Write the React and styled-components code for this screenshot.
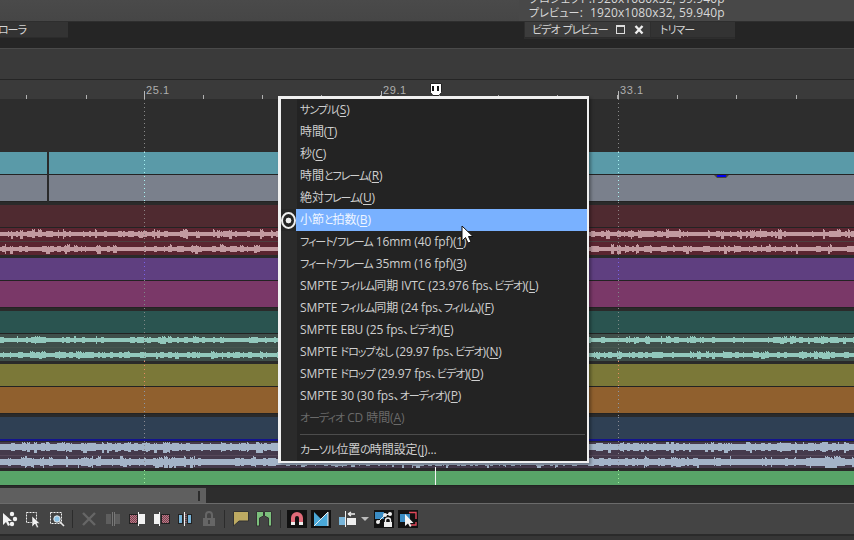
import React from 'react';
import styled, { createGlobalStyle } from 'styled-components';

const GlobalStyle = createGlobalStyle`
	html, body {
		margin: 0;
		padding: 0;
		background: #2d2d2d;
		overflow: hidden;
	}
	* {
		box-sizing: border-box;
	}
`;

const uiFont = `"Open Sans", "Noto Sans CJK JP", sans-serif`;

const Page = styled.div`
	position: relative;
	width: 854px;
	height: 540px;
	overflow: hidden;
	display: flex;
	flex-direction: column;
	font-family: ${uiFont};
	font-feature-settings: "palt";
`;

// the original UI font has condensed kana
const KanaRun = styled.span`
	font-size: 11px;
	letter-spacing: -1px;
`;

const InfoBar = styled.div`
	height: 22px;
	flex: none;
	display: flex;
	justify-content: flex-end;
	background: linear-gradient(#4a4a4a, #464646);
	border-bottom: 1px solid #2e2e2e;
`;

const InfoPanel = styled.div`
	width: 335px;
	height: 29px;
	flex: none;
	margin-top: -8px;
	padding-left: 10px;
	background: #484848;
	color: #d8d8d8;
	font-size: 12px;
	line-height: 14px;
`;

const InfoRow = styled.div`
	display: flex;
	white-space: nowrap;
	span:first-child {
		flex: none;
		width: 61px;
	}
	span:last-child {
		letter-spacing: 0.12px;
	}
`;

const TabStrip = styled.div`
	height: 26px;
	flex: none;
	display: flex;
	justify-content: space-between;
	background: #252525;
	padding-right: 119px;
`;

const Tab = styled.div`
	height: 16px;
	flex: none;
	display: flex;
	align-items: center;
	background: ${({ active }) => (active ? '#3c3c3c' : '#333')};
	border-bottom: 1px solid #2c2c2c;
	color: #d4d4d4;
	font-size: 12px;
	white-space: pre;
	width: ${({ width }) => width}px;
	padding-left: ${({ inset }) => inset}px;
`;

const TabTitle = styled.span`
	width: 83px;
	flex: none;
`;

const TabGlyph = styled.svg`
	display: block;
	flex: none;
	margin-right: 8px;
`;

const TabGroup = styled.div`
	display: flex;
	background: #2e2e2e;
	height: 17px;
	padding-left: 1px;
	gap: 1px;
`;

const LeftTab = styled(Tab)`
	justify-content: flex-end;
	padding-right: 42px;
	overflow: hidden;
`;

const ToolStrip = styled.div`
	height: 32px;
	flex: none;
	background: #3a3a3a;
	border-top: 1px solid #4a4a4a;
	border-bottom: 1px solid #252525;
`;

const Ruler = styled.div`
	position: relative;
	height: 19px;
	flex: none;
	background: #3a3a3a;
`;

const RulerDrawing = styled.svg`
	display: block;
`;

const RulerLabel = styled.span`
	position: absolute;
	top: 3px;
	left: ${({ x }) => x}px;
	color: #aeaeae;
	font-family: "Liberation Sans", sans-serif;
	font-size: 11px;
	letter-spacing: 0.6px;
	line-height: 14px;
`;

const Marker = styled.svg`
	position: absolute;
	left: 429px;
	top: 3px;
`;

const TrackArea = styled.div`
	position: relative;
	flex: none;
	height: 387px;
	background: #2d2d2d;
	display: flex;
	flex-direction: column;
`;

const EmptyLane = styled.div`
	height: 53px;
	flex: none;
`;

const Lane = styled.div`
	flex: none;
	height: ${({ h }) => h}px;
	background: ${({ color }) => color};
	border-bottom: 1px solid #232323;
`;

const Gap = styled.div`
	flex: none;
	height: ${({ h }) => h}px;
	background: #2a2a2a;
`;

const WaveLane = styled.div`
	flex: none;
	height: ${({ h }) => h}px;
	background: ${({ color }) => color};
`;

const WaveSvg = styled.svg`
	display: block;
`;

const Overlay = styled.svg`
	position: absolute;
	left: 0;
	top: 0;
	pointer-events: none;
`;

const ScrollRow = styled.div`
	height: 17px;
	flex: none;
	background: #2d2d2d;
	border-top: 2px solid #2a2a2a;
`;

const ScrollThumb = styled.div`
	width: 206px;
	height: 15px;
	background: #5f5f5f;
	display: flex;
	justify-content: flex-end;
	align-items: center;
	padding-right: 6px;
	&::after {
		content: "";
		width: 2px;
		height: 10px;
		background: #2c2c2c;
	}
`;

const Toolbar = styled.div`
	height: 33px;
	flex: none;
	display: flex;
	align-items: center;
	background: #444;
	border-top: 1px solid #6b6b6b;
	border-bottom: 2px solid #2a2a2a;
`;

const ToolIcon = styled.svg`
	display: block;
	flex: none;
	width: ${({ width }) => width || 20}px;
	height: 20px;
	margin-left: ${({ gap }) => (gap === undefined ? 4 : gap)}px;
`;

const ToolDivider = styled.div`
	width: 1px;
	height: 18px;
	background: #2c2c2c;
	flex: none;
	margin: 0 ${({ after }) => after}px 0 ${({ before }) => before}px;
`;

const Footer = styled.div`
	flex: 1;
	background: #363636;
`;

const Menu = styled.div`
	position: absolute;
	left: 278px;
	top: 96px;
	width: 311px;
	height: 367px;
	border: 3px solid #f0f0f0;
	border-right-width: 2px;
	border-bottom-width: 2px;
	background: #232323;
	box-shadow: 2px 2px 3px rgba(0, 0, 0, 0.35);
	display: flex;
	flex-direction: column;
`;

const Gutter = styled.div`
	position: absolute;
	left: 0;
	top: 0;
	bottom: 0;
	width: 16px;
	background: #2b2b2b;
`;

const MenuItem = styled.div`
	position: relative;
	height: 22px;
	flex: none;
	display: flex;
	align-items: center;
	padding: 0 0 2px 19px;
	font-size: 12px;
	letter-spacing: -0.1px;
	white-space: pre;
	color: ${({ disabled, active }) => (disabled ? '#6a6a6a' : active ? '#eef5ff' : '#cfcfcf')};
	background: ${({ active }) => (active ? '#79b1ff' : 'transparent')};
	u {
		text-underline-offset: 2px;
	}
`;

const CheckBox = styled.div`
	position: absolute;
	left: 0;
	top: 0;
	width: 15px;
	height: 22px;
	background: #262626;
	display: flex;
	align-items: center;
	justify-content: center;
	&::after {
		content: "";
		width: 13px;
		height: 13px;
		border-radius: 50%;
		border: 2px solid #eee;
		background: radial-gradient(circle, #eee 0, #eee 2.6px, #232323 3.2px);
	}
`;

const Separator = styled.div`
	height: 1px;
	flex: none;
	margin: 5px 2px 4px 19px;
	background: #4c4c4c;
`;

const Pointer = styled.svg`
	position: absolute;
	left: 461px;
	top: 225px;
`;

function Jp({ text }) {
	return text.split(/([\u30a0-\u30ff\u3041-\u3096]+)/).map((part, i) => (
		i % 2 ? <KanaRun key={i}>{part}</KanaRun> : part
	));
}

// simple repeatable noise so the wave form is the same on every load
function makeWave(seed, width, mid, base, spike) {
	let s = seed;
	const rand = () => {
		s = (s * 16807) % 2147483647;
		return s / 2147483647;
	};
	let d = '';
	let x = 0;
	while (x < width) {
		const r = rand();
		const run = 1 + Math.floor(rand() * 4);
		let up = base + (rand() > 0.7 ? 1 : 0);
		let down = up;
		if (r > 0.8) {
			up = base + 1 + Math.floor(rand() * spike);
			down = base + 1 + Math.floor(rand() * spike);
		}
		for (let i = 0; i < run; i += 1) {
			const top = mid - (i % 2 && r > 0.8 ? up - 1 : up);
			d += `M${x + 0.5} ${top}V${mid + down}`;
			x += 1;
		}
	}
	return d;
}

function Wave({ h, color, line, mids, base, spike, seed }) {
	return (
		<WaveSvg width="854" height={h}>
			{line && <rect y={Math.floor(h / 2)} width="854" height="1" fill={line} />}
			{mids.map((mid, i) => (
				<path key={mid} d={makeWave(seed + i * 7, 854, mid, base, spike)} stroke={color} strokeWidth="1" fill="none" />
			))}
		</WaveSvg>
	);
}

const dotted = (x, y1, y2, color) => (
	<line key={`${x}-${y1}`} x1={x + 0.5} x2={x + 0.5} y1={y1} y2={y2} stroke={color} strokeDasharray="1 3" />
);

const dotBands = [
	[0, 53, '#8a8a8a'],
	[53, 103, '#a8f4f4'],
	[103, 159, '#8d8585'],
	[159, 181, '#7a62e8'],
	[181, 262, '#7f8a88'],
	[262, 288, '#e98a62'],
	[288, 318, '#8c98a6'],
	[318, 368, '#8c8c94'],
	[371, 386, '#9cf09c'],
];

const menuItems = [
	{ label: 'サンプル', key: 'S' },
	{ label: '時間', key: 'T' },
	{ label: '秒', key: 'C' },
	{ label: '時間とフレーム', key: 'R' },
	{ label: '絶対フレーム', key: 'U' },
	{ label: '小節と拍数', key: 'B', active: true },
	{ label: 'フィート/フレーム 16mm (40 fpf)', key: '1' },
	{ label: 'フィート/フレーム 35mm (16 fpf)', key: '3' },
	{ label: 'SMPTE フィルム同期 IVTC (23.976 fps、ビデオ)', key: 'L' },
	{ label: 'SMPTE フィルム同期 (24 fps、フィルム)', key: 'F' },
	{ label: 'SMPTE EBU (25 fps、ビデオ)', key: 'E' },
	{ label: 'SMPTE ドロップなし (29.97 fps、ビデオ)', key: 'N' },
	{ label: 'SMPTE ドロップ (29.97 fps、ビデオ)', key: 'D' },
	{ label: 'SMPTE 30 (30 fps、オーディオ)', key: 'P' },
	{ label: 'オーディオ CD 時間', key: 'A', disabled: true },
];

const ticks = [26, 86, 144, 203, 262, 321, 380, 439, 498, 557, 617, 677, 736, 796];
const majors = [144, 381, 618];

export default function App() {
	return (
		<Page>
			<GlobalStyle />
			<InfoBar>
				<InfoPanel>
					<InfoRow><span><Jp text="プロジェクト:" /></span><span>1920x1080x32, 59.940p</span></InfoRow>
					<InfoRow><span><Jp text="プレビュー:" /></span><span>1920x1080x32, 59.940p</span></InfoRow>
				</InfoPanel>
			</InfoBar>
			<TabStrip>
				<LeftTab width={68}><span><Jp text="ミキサーコントローラ" /></span></LeftTab>
				<TabGroup>
					<Tab active width={125} inset={7}>
						<TabTitle><Jp text="ビデオ プレビュー" /></TabTitle>
						<TabGlyph width="11" height="11" viewBox="0 0 11 11">
							<rect x="1.5" y="1.5" width="8" height="8" fill="none" stroke="#ddd" />
							<rect x="1" y="1" width="9" height="2" fill="#ddd" />
						</TabGlyph>
						<TabGlyph width="10" height="11" viewBox="0 0 10 11">
							<path d="M1.5 2L8.5 9.5M8.5 2L1.5 9.5" stroke="#eee" strokeWidth="2.4" />
						</TabGlyph>
					</Tab>
					<Tab width={84} inset={9}><span><Jp text="トリマー" /></span></Tab>
				</TabGroup>
			</TabStrip>
			<ToolStrip />
			<Ruler>
				<RulerDrawing width="854" height="19">
					{ticks.map((x) => (
						<rect key={x} x={x} y="15" width="1" height="4" fill="#b0b0b0" />
					))}
					{majors.map((x) => (
						<rect key={x} x={x} y="11" width="1" height="8" fill="#b8b8b8" />
					))}
				</RulerDrawing>
				<RulerLabel x={146}>25.1</RulerLabel>
				<RulerLabel x={383}>29.1</RulerLabel>
				<RulerLabel x={620}>33.1</RulerLabel>
				<Marker width="14" height="14" viewBox="0 0 14 14">
					<path d="M1.5 0.5H12.5V9.5L10 12.5H4L1.5 9.5Z" fill="#fff" stroke="#222" />
					<rect x="3" y="3" width="2" height="5" fill="#111" />
					<rect x="8" y="3" width="2" height="5" fill="#111" />
				</Marker>
			</Ruler>
			<TrackArea>
				<EmptyLane />
				<Lane h={23} color="#5a9aa8" />
				<Lane h={27} color="#7a808c" />
				<Gap h={3} />
				<Lane h={23} color="#4f2a30" />
				<WaveLane h={27} color="#5a2530">
					<Wave h={27} color="#c29aa0" line="#4d4040" mids={[6, 21]} base={2} spike={3} seed={11} />
				</WaveLane>
				<Gap h={3} />
				<Lane h={23} color="#5f3f80" />
				<Lane h={27} color="#7a3868" />
				<Gap h={3} />
				<Lane h={23} color="#2a5450" />
				<WaveLane h={27} color="#3f4f4a">
					<Wave h={27} color="#92c8bc" line="#47564f" mids={[6, 21]} base={2} spike={2} seed={29} />
				</WaveLane>
				<Gap h={3} />
				<Lane h={23} color="#7b7838" />
				<Lane h={27} color="#90602e" />
				<Gap h={3} />
				<Lane h={23} color="#2f4054" />
				<Gap h={2} />
				<WaveLane h={26} color="#453a4c">
					<Wave h={26} color="#a4b4c8" line="#56485a" mids={[5, 20]} base={3} spike={3} seed={53} />
				</WaveLane>
				<Gap h={3} />
				<Lane h={15} color="#58a468" />
				<Overlay width="854" height="387">
					<rect x="47" y="53" width="2" height="50" fill="#2a2a2a" />
					<rect x="0" y="340" width="854" height="2" fill="#14148c" />
					<path d="M714 76H729L726 79H717Z" fill="#444" />
					<rect x="717" y="76" width="9" height="2" fill="#0000ee" />
					{dotBands.map(([y1, y2, c]) => dotted(144, y1, y2, c))}
					{dotBands.map(([y1, y2, c]) => dotted(618, y1, y2, c))}
					<rect x="435" y="368" width="1" height="18" fill="#f4f4f4" />
				</Overlay>
			</TrackArea>
			<ScrollRow>
				<ScrollThumb />
			</ScrollRow>
			<Toolbar>
				<ToolIcon gap={0} viewBox="0 0 20 20">
					<path d="M3 4L3 16L6 13L8 17L10 16L8 12L12 12Z" fill="#f2f2f2" />
					<circle cx="12" cy="5" r="2.2" fill="#f2f2f2" />
					<circle cx="15" cy="10" r="2.2" fill="#f2f2f2" />
					<circle cx="12" cy="15" r="2.2" fill="#f2f2f2" />
				</ToolIcon>
				<ToolIcon gap={3} viewBox="0 0 20 20">
					<rect x="3.5" y="3.5" width="10" height="10" fill="none" stroke="#f2f2f2" strokeDasharray="2 1" />
					<path d="M9 7L9 18L12 15L14 19L15.5 18L14 14.5L17 14.5Z" fill="#f2f2f2" stroke="#333" strokeWidth="0.5" />
				</ToolIcon>
				<ToolIcon gap={4} viewBox="0 0 20 20">
					<rect x="3.5" y="3.5" width="11" height="11" fill="none" stroke="#f2f2f2" strokeDasharray="2 1" />
					<circle cx="10" cy="10" r="3.2" fill="#8cc4e8" stroke="#e8e8e8" />
					<path d="M12.5 12.5L17 17" stroke="#e8e8e8" strokeWidth="1.6" />
				</ToolIcon>
				<ToolDivider before={5} after={6} />
				<ToolIcon gap={0} viewBox="0 0 20 20">
					<path d="M4 4L16 16M16 4L4 16" stroke="#666" strokeWidth="2.4" />
				</ToolIcon>
				<ToolIcon gap={4} viewBox="0 0 20 20">
					<rect x="3" y="5" width="5" height="10" fill="#5e5e5e" />
					<rect x="12" y="5" width="5" height="10" fill="#5e5e5e" />
					<rect x="9" y="3" width="1" height="14" fill="#777" />
					<rect x="11" y="3" width="1" height="14" fill="#777" />
				</ToolIcon>
				<ToolIcon gap={4} viewBox="0 0 20 20">
					<defs>
						<pattern id="hatch" width="2" height="2" patternUnits="userSpaceOnUse">
							<rect width="2" height="2" fill="#b87c8a" />
							<rect width="1" height="1" fill="#7a3f4c" />
							<rect x="1" y="1" width="1" height="1" fill="#7a3f4c" />
						</pattern>
					</defs>
					<rect x="2.5" y="5.5" width="8" height="9" fill="url(#hatch)" stroke="#222" />
					<rect x="11" y="3" width="1" height="14" fill="#f2f2f2" />
					<rect x="12" y="5" width="6" height="10" fill="#f2f2f2" />
				</ToolIcon>
				<ToolIcon gap={4} viewBox="0 0 20 20">
					<rect x="3" y="5" width="5" height="10" fill="#f2f2f2" />
					<rect x="8" y="3" width="1" height="14" fill="#f2f2f2" />
					<rect x="10.5" y="5.5" width="8" height="9" fill="url(#hatch)" stroke="#222" />
				</ToolIcon>
				<ToolIcon gap={4} viewBox="0 0 20 20">
					<rect x="3.5" y="5.5" width="4" height="9" fill="#78b4d8" stroke="#222" />
					<rect x="9" y="3" width="1" height="14" fill="#f2f2f2" />
					<path d="M11 5V15" stroke="#c87a88" strokeDasharray="1 1" />
					<rect x="12.5" y="5.5" width="4" height="9" fill="#78b4d8" stroke="#222" />
				</ToolIcon>
				<ToolIcon gap={4} viewBox="0 0 20 20">
					<path d="M7 9V6a3 3 0 0 1 6 0v3" fill="none" stroke="#666" strokeWidth="2" />
					<rect x="4" y="9" width="12" height="8" fill="#666" />
					<rect x="9" y="11" width="2" height="4" fill="#444" />
				</ToolIcon>
				<ToolDivider before={5} after={6} />
				<ToolIcon gap={0} viewBox="0 0 20 20">
					<path d="M2.5 2.5H17.5V12H8L2.5 17Z" fill="#bdaa62" stroke="#333" />
				</ToolIcon>
				<ToolIcon gap={3} viewBox="0 0 20 20">
					<path d="M2.5 2.5H9.5V7L5.5 9V17H2.5Z" fill="#7cc07c" stroke="#333" />
					<path d="M17.5 2.5H10.5V7L14.5 9V17H17.5Z" fill="#7cc07c" stroke="#333" />
				</ToolIcon>
				<ToolDivider before={6} after={6} />
				<ToolIcon gap={0} viewBox="0 0 20 20">
					<rect y="1" width="20" height="18" fill="#111" />
					<path d="M4 13V9a6 6 0 0 1 12 0v4h-4V9a2 2 0 0 0-4 0v4Z" fill="#e06a78" />
					<rect x="4" y="13" width="4" height="3" fill="#eee" />
					<rect x="12" y="13" width="4" height="3" fill="#eee" />
				</ToolIcon>
				<ToolIcon gap={4} viewBox="0 0 20 20">
					<rect y="1" width="20" height="18" fill="#111" />
					<path d="M3 3L10 10L3 17Z" fill="#4aa8d8" />
					<path d="M17 3V17H3L10 10Z" fill="#4aa8d8" />
					<path d="M17 3L3 17M17 3V17" stroke="#eee" strokeWidth="1" fill="none" />
				</ToolIcon>
				<ToolIcon gap={7} viewBox="0 0 20 20">
					<rect x="1" y="8" width="6" height="8" fill="#78b4d8" />
					<rect x="7" y="2" width="1" height="16" fill="#eee" />
					<rect x="9" y="9" width="9" height="7" fill="#eee" />
					<path d="M10 5H17M10 5L13 3M10 5L13 7" stroke="#eee" strokeWidth="1.4" fill="none" />
				</ToolIcon>
				<ToolIcon gap={1} width={12} viewBox="0 0 12 20">
					<path d="M2 8H10L6 12Z" fill="#bbb" />
				</ToolIcon>
				<ToolIcon gap={3} viewBox="0 0 20 20">
					<rect y="1" width="20" height="18" fill="#111" />
					<rect x="1" y="3" width="9" height="7" fill="#3a8cc4" />
					<path d="M4 13L11 6L16 5" stroke="#eee" fill="none" />
					<circle cx="4" cy="13" r="2" fill="#eee" />
					<circle cx="11" cy="6" r="2" fill="#eee" />
					<circle cx="16" cy="5" r="2" fill="#eee" />
					<rect x="10" y="13" width="8" height="5" fill="#eee" />
					<path d="M11.5 13V11.5a2.5 2.5 0 0 1 5 0v1.5" fill="none" stroke="#eee" strokeWidth="1.4" />
				</ToolIcon>
				<ToolIcon gap={4} viewBox="0 0 20 20">
					<rect y="1" width="20" height="18" fill="#111" />
					<rect x="2" y="5" width="10" height="8" fill="#3a8cc4" />
					<path d="M11 3.5H18V10M18 13V16H13" fill="none" stroke="#e0485a" strokeWidth="1.4" />
					<path d="M7 5V17L10 14.5L12 18L13.5 17L12 14H15.5Z" fill="#f2f2f2" />
				</ToolIcon>
			</Toolbar>
			<Footer />
			<Menu>
				<Gutter />
				{menuItems.map((item) => (
					<MenuItem key={item.key} active={item.active} disabled={item.disabled}>
						{item.active && <CheckBox />}
						<span><Jp text={item.label} />(<u>{item.key}</u>)</span>
					</MenuItem>
				))}
				<Separator />
				<MenuItem><span><Jp text="カーソル位置の時間設定" />(<u>J</u>)...</span></MenuItem>
			</Menu>
			<Pointer width="14" height="20" viewBox="0 0 14 20">
				<path d="M1 1V16L4.5 12.5L7 18L10 17L7.5 11.5H12Z" fill="#fff" stroke="#111" />
			</Pointer>
		</Page>
	);
}
